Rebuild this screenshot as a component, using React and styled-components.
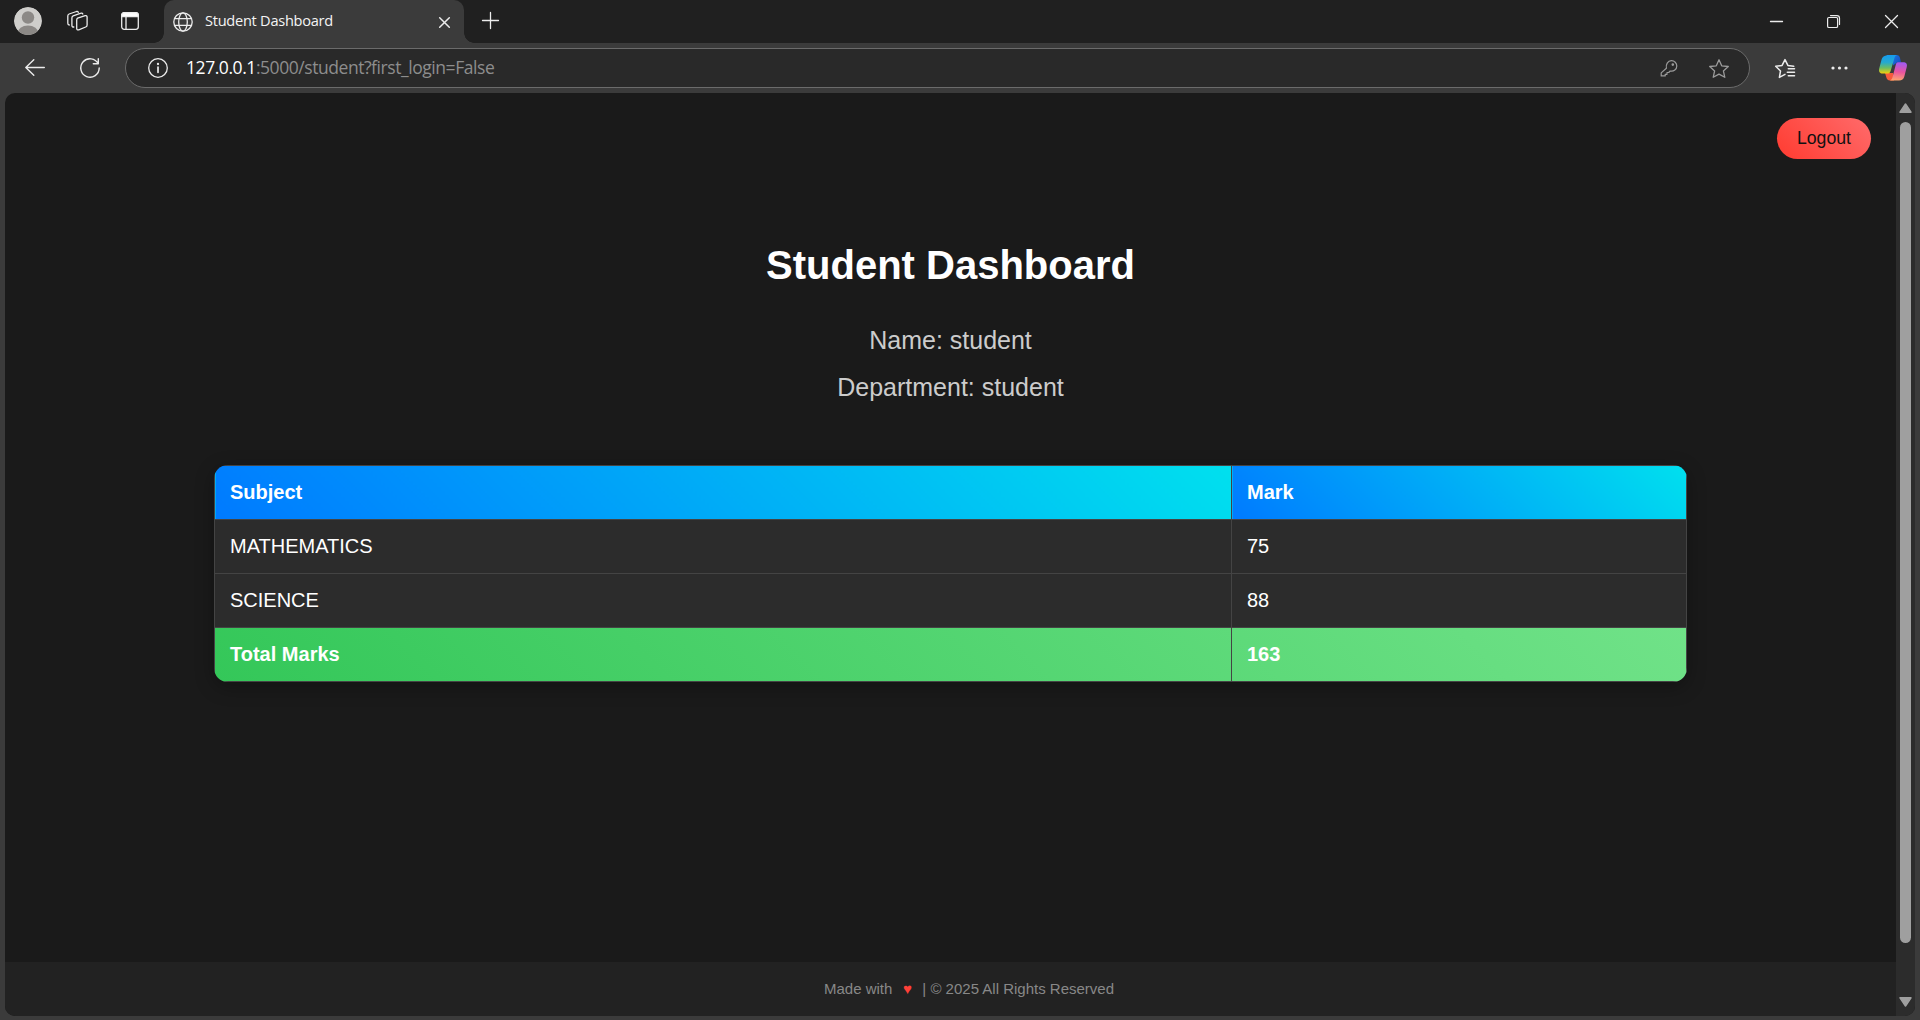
import React from "react";
import styled, { createGlobalStyle } from "styled-components";

const GlobalStyle = createGlobalStyle`
  * { box-sizing: border-box; }
  html, body { margin: 0; background: #3b3b3b; }
  body { overflow: hidden; }
`;

const uiFont = `"Segoe UI", "Open Sans", "Noto Sans", sans-serif`;
const pageFont = `Arial, "Liberation Sans", sans-serif`;

const Window = styled.div`
  width: 1920px;
  height: 1020px;
  display: flex;
  flex-direction: column;
  background: #3b3b3b;
  overflow: hidden;
`;

const TitleBar = styled.div`
  height: 43px;
  flex: none;
  display: flex;
  align-items: flex-start;
  background: #202020;
`;

const Icon = styled.svg`
  flex: none;
  display: block;
  overflow: visible;
  fill: none;
  stroke: ${(p) => p.$color || "#ececec"};
  stroke-width: ${(p) => p.$weight || 1.3};
  stroke-linecap: round;
  stroke-linejoin: round;
  margin-left: ${(p) => p.$gap || 0}px;
  margin-top: ${(p) => p.$top || 0}px;
`;

const Tab = styled.div`
  position: relative;
  flex: none;
  width: 300px;
  height: 43px;
  margin-left: 25px;
  padding: 0 14px 0 9px;
  display: flex;
  align-items: flex-start;
  background: #3b3b3b;
  border-radius: 10px 10px 0 0;
  &::before,
  &::after {
    content: "";
    position: absolute;
    bottom: 0;
    width: 10px;
    height: 10px;
  }
  &::before {
    left: -10px;
    background: radial-gradient(circle at 0 0, transparent 9.5px, #3b3b3b 10px);
  }
  &::after {
    right: -10px;
    background: radial-gradient(circle at 100% 0, transparent 9.5px, #3b3b3b 10px);
  }
`;

const TabTitle = styled.span`
  flex: 1;
  margin: 9px 0 0 12px;
  font: 400 14.6px/22px ${uiFont};
  letter-spacing: -0.27px;
  white-space: nowrap;
  color: #f4f4f4;
`;

const WindowControls = styled.div`
  margin-left: auto;
  padding-right: 22px;
  display: flex;
`;

const Toolbar = styled.div`
  height: 50px;
  flex: none;
  display: flex;
  align-items: flex-start;
`;

const AddressBar = styled.div`
  flex: none;
  width: 1625px;
  height: 40px;
  margin: 5px 0 0 25px;
  padding-right: 20px;
  display: flex;
  align-items: flex-start;
  border: 1px solid #6b6b6b;
  border-radius: 20px;
  background: #292929;
`;

const Url = styled.span`
  flex: 1;
  margin: 5px 0 0 18px;
  font: 400 17.5px/26px ${uiFont};
  letter-spacing: -0.44px;
  white-space: nowrap;
  color: #8d8d8d;
`;

const Host = styled.span`
  color: #fff;
`;

const Viewport = styled.div`
  flex: none;
  height: 923px;
  margin: 0 5px;
  display: flex;
  border-radius: 10px;
  overflow: hidden;
  background: #1a1a1a;
`;

const Page = styled.div`
  flex: 1;
  display: flex;
  flex-direction: column;
  font-family: ${pageFont};
`;

const PageHeader = styled.header`
  display: flex;
  justify-content: flex-end;
  padding: 25px 25px 0;
`;

const LogoutButton = styled.button`
  width: 94px;
  height: 41px;
  padding: 0 0 2px;
  border: 0;
  border-radius: 21px;
  background: linear-gradient(45deg, #ff3b30, #ff6b6b);
  color: #111;
  font: 400 17.7px/20px ${pageFont};
`;

const Main = styled.main`
  flex: 1;
  display: flex;
  flex-direction: column;
  align-items: center;
  padding-top: 83px;
`;

const Heading = styled.h1`
  margin: 0 0 38px;
  font-size: 40px;
  line-height: 46px;
  font-weight: 700;
  color: #fff;
`;

const Detail = styled.p`
  margin: 0 0 19px;
  font-size: 25px;
  line-height: 28px;
  color: #ccc;
`;

const MarksTable = styled.table`
  width: 1473px;
  margin-top: 45px;
  table-layout: fixed;
  border-collapse: collapse;
  border-radius: 14px;
  overflow: hidden;
  background: #2c2c2c;
  box-shadow: 0 5px 19px rgba(0, 0, 0, 0.3);
  color: #fff;
  font-size: 20px;
  line-height: 23px;
  text-align: left;
`;

const SubjectCol = styled.col`
  width: 1017px;
`;

const HeadCell = styled.th`
  height: 54px;
  padding: 0 15px;
  border: 1px solid #444;
  background: linear-gradient(45deg, #007aff, #00e0ee);
`;

const Cell = styled.td`
  height: 54px;
  padding: 0 15px;
  border: 1px solid #444;
`;

const TotalRow = styled.tr`
  background: linear-gradient(45deg, #34c759, #70e288);
  font-weight: 700;
`;

const Footer = styled.footer`
  height: 54px;
  padding: 18px 0 0 37px;
  display: flex;
  justify-content: center;
  background: #222;
  color: #888;
  font-size: 15px;
  line-height: 18px;
  white-space: pre;
`;

const Heart = styled.span`
  width: 10px;
  margin: 0 10px;
  text-align: center;
  color: #ff4038;
`;

const Scrollbar = styled.div`
  flex: none;
  width: 19px;
  padding: 10px 0 9px;
  display: flex;
  flex-direction: column;
  align-items: center;
  background: #2c2c2c;
`;

const Thumb = styled.div`
  width: 11px;
  height: 821px;
  margin: 9px 0 54px;
  border-radius: 6px;
  background: #9f9f9f;
`;

const marks = [
  { subject: "MATHEMATICS", mark: 75 },
  { subject: "SCIENCE", mark: 88 },
];

function Avatar() {
  return (
    <Icon width="28" height="28" viewBox="0 0 28 28" $gap={14} $top={7}>
      <defs>
        <clipPath id="avatar-clip">
          <circle cx="14" cy="14" r="14" />
        </clipPath>
      </defs>
      <g clipPath="url(#avatar-clip)" stroke="none">
        <circle cx="14" cy="14" r="14" fill="#cfcecb" />
        <circle cx="14" cy="10.5" r="6.2" fill="#8c8986" />
        <ellipse cx="14" cy="26.5" rx="10.5" ry="8" fill="#8c8986" />
      </g>
    </Icon>
  );
}

function Copilot() {
  return (
    <Icon width="28" height="26" viewBox="0 0 28 26" $gap={31} $top={12}>
      <defs>
        <linearGradient id="cp-left" x1="0" y1="0" x2="0" y2="1">
          <stop offset="0" stopColor="#159bef" />
          <stop offset=".4" stopColor="#25a9cf" />
          <stop offset=".7" stopColor="#6cbd62" />
          <stop offset="1" stopColor="#f3cf0b" />
        </linearGradient>
        <linearGradient id="cp-right" x1=".3" y1="0" x2=".2" y2="1">
          <stop offset="0" stopColor="#a25af0" />
          <stop offset=".5" stopColor="#e9549f" />
          <stop offset="1" stopColor="#ffa96c" />
        </linearGradient>
        <linearGradient id="cp-top" x1="0" y1="0" x2="1" y2="1">
          <stop offset="0" stopColor="#1c75df" />
          <stop offset="1" stopColor="#1549bf" />
        </linearGradient>
      </defs>
      <g stroke="none">
        <path d="M14 0h3.500c2 0 3 1 3.500 3l1 4.500h-4l-4 3z" fill="url(#cp-top)" />
        <path d="M6 18h8l1 7.500h-4c-2.300 0-3.200-1.200-3.700-3.200z" fill="#f65a3c" />
        <path d="M7.200.500C8 .1 8.600 0 9.400 0H18c-1.600.6-2.200 1.700-2.700 3.400l-3.600 12.300c-.6 2-1.600 2.800-3.500 2.800H3.800C.8 18.500-.5 16.900.2 13.500L2.600 4.600C3.200 2.400 4.800.900 7.200.500z" fill="url(#cp-left)" />
        <path d="M18.600 7.200h5.600c3 0 4.400 1.700 3.500 5l-2.300 9c-.8 2.900-2.500 4.400-5.400 4.400h-9.200c1.600-.6 2.200-1.500 2.700-3.300l3.200-12.200c.4-1.600.7-2.500 1.900-2.900z" fill="url(#cp-right)" />
      </g>
    </Icon>
  );
}

const starPath =
  "M10 .8l2.700 6 6.600.7-4.900 4.400 1.400 6.400-5.800-3.200-5.800 3.200 1.400-6.400L.7 7.500l6.600-.7z";

export default function App() {
  return (
    <>
      <GlobalStyle />
      <Window>
        <TitleBar>
          <Avatar />
          <Icon width="21" height="21" viewBox="0 0 21 21" $gap={25} $top={11}>
            <path d="M10.600 7.200l7.600-2.500c1-.3 1.900.3 1.900 1.300v8c0 1-.5 1.700-1.400 2l-7 2.800c-1.200.4-2-.1-2-1.200V9.300c0-1.100.1-1.700.9-2.100z" />
            <path d="M6.800 16c-1.200.1-1.900-.5-1.900-1.600V7c0-1.100.4-1.700 1.300-2.100L14 2.200c.8-.3 1.500 0 1.800.8" />
            <path d="M2.300 14C1.300 13.900.8 13.200.8 12.300V5c0-1 .4-1.700 1.300-2L9.500.5c.8-.2 1.500.1 1.800.8" />
          </Icon>
          <Icon width="18" height="18" viewBox="0 0 18 18" $gap={33} $top={12}>
            <rect x=".7" y=".7" width="16.600" height="16.600" rx="2.500" />
            <path d="M.7 4.600V3.200A2.500 2.500 0 0 1 3.200.7h11.600a2.500 2.500 0 0 1 2.500 2.500v1.400z" fill="#fff" />
            <path d="M5 5v12" />
          </Icon>
          <Tab>
            <Icon width="20" height="20" viewBox="0 0 20 20" $top={12}>
              <circle cx="10" cy="10" r="9.200" />
              <ellipse cx="10" cy="10" rx="4.300" ry="9.200" />
              <path d="M1.600 6.700h16.800M1.600 13.300h16.800" />
            </Icon>
            <TabTitle>Student Dashboard</TabTitle>
            <Icon width="11" height="11" viewBox="0 0 11 11" $top={17} $weight={1.5}>
              <path d="M.7.700l9.600 9.600M10.300.700L.7 10.300" />
            </Icon>
          </Tab>
          <Icon width="17" height="17" viewBox="0 0 17 17" $gap={18} $top={12}>
            <path d="M.5 8.500h16M8.500.5v16" />
          </Icon>
          <WindowControls>
            <Icon width="13" height="13" viewBox="0 0 13 13" $top={15}>
              <path d="M.5 6.500h12" />
            </Icon>
            <Icon width="13" height="13" viewBox="0 0 13 13" $gap={44} $top={15} $weight={1.2}>
              <rect x=".6" y="2.500" width="10" height="10" rx="1.300" />
              <path d="M3.500.6h6.400a2.600 2.600 0 0 1 2.600 2.600v6.300" />
            </Icon>
            <Icon width="13" height="13" viewBox="0 0 13 13" $gap={45} $top={15}>
              <path d="M.5.500l12 12M12.500.500l-12 12" />
            </Icon>
          </WindowControls>
        </TitleBar>

        <Toolbar>
          <Icon width="20" height="17" viewBox="0 0 20 17" $gap={25} $top={16} $weight={1.4}>
            <path d="M19.300 8.500H1M8.800.7L.8 8.500l8 7.800" />
          </Icon>
          <Icon width="20" height="20" viewBox="0 0 20 20" $gap={35} $top={15} $weight={1.400}>
            <path d="M18.200 5.800A9.200 9.200 0 1 0 19.200 10M18.300.8v5h-5" />
          </Icon>
          <AddressBar>
            <Icon width="20" height="20" viewBox="0 0 20 20" $gap={22} $top={9}>
              <circle cx="10" cy="10" r="9.300" />
              <path d="M10 9v5.300" strokeWidth="1.700" />
              <circle cx="10" cy="6" r=".5" fill="#ececec" />
            </Icon>
            <Url>
              <Host>127.0.0.1</Host>:5000/student?first_login=False
            </Url>
            <Icon width="17" height="17" viewBox="0 0 17 17" $top={11} $color="#9b9b9b" $weight={1.200}>
              <path d="M5.400 8.300C4.500 4.500 6.800.7 10.400.7c3 0 5.400 2.300 5.400 5.300 0 3.400-3.100 5.700-6.600 5l-1.500 1.500H6v1.800H4.200v1.600H.2v-3z" />
              <circle cx="11.800" cy="4.600" r=".7" fill="#9b9b9b" />
            </Icon>
            <Icon width="20" height="19" viewBox="0 0 20 19" $gap={31} $top={10} $color="#9b9b9b">
              <path d={starPath} />
            </Icon>
          </AddressBar>
          <Icon width="20" height="19" viewBox="0 0 20 19" $gap={25} $top={16} $weight={1.500}>
            <path d="M10 15.300l-5.600 3.100 1.100-6.400L.7 7.300l6.400-.9L10 .6l2.900 5.800 5.800.9M13.300 9.800h6.200M12.300 13.200h7.200M13.300 16.800h6.200" />
          </Icon>
          <Icon width="17" height="4" viewBox="0 0 17 4" $gap={36} $top={23}>
            <g fill="#ececec" stroke="none">
              <circle cx="2" cy="2" r="1.600" />
              <circle cx="8.500" cy="2" r="1.600" />
              <circle cx="15" cy="2" r="1.600" />
            </g>
          </Icon>
          <Copilot />
        </Toolbar>

        <Viewport>
          <Page>
            <PageHeader>
              <LogoutButton>Logout</LogoutButton>
            </PageHeader>
            <Main>
              <Heading>Student Dashboard</Heading>
              <Detail>Name: student</Detail>
              <Detail>Department: student</Detail>
              <MarksTable>
                <colgroup>
                  <SubjectCol />
                  <col />
                </colgroup>
                <thead>
                  <tr>
                    <HeadCell>Subject</HeadCell>
                    <HeadCell>Mark</HeadCell>
                  </tr>
                </thead>
                <tbody>
                  {marks.map((row) => (
                    <tr key={row.subject}>
                      <Cell>{row.subject}</Cell>
                      <Cell>{row.mark}</Cell>
                    </tr>
                  ))}
                  <TotalRow>
                    <Cell>Total Marks</Cell>
                    <Cell>{marks.reduce((sum, row) => sum + row.mark, 0)}</Cell>
                  </TotalRow>
                </tbody>
              </MarksTable>
            </Main>
            <Footer>
              Made with<Heart>♥</Heart>| © 2025 All Rights Reserved
            </Footer>
          </Page>
          <Scrollbar>
            <Icon width="13" height="10" viewBox="0 0 13 10" $color="#9f9f9f" $weight={1.500}>
              <path d="M6.500 1L12 9.200H1z" fill="#9f9f9f" />
            </Icon>
            <Thumb />
            <Icon width="13" height="10" viewBox="0 0 13 10" $color="#9f9f9f" $weight={1.500}>
              <path d="M6.500 9L12 .8H1z" fill="#9f9f9f" />
            </Icon>
          </Scrollbar>
        </Viewport>
      </Window>
    </>
  );
}
